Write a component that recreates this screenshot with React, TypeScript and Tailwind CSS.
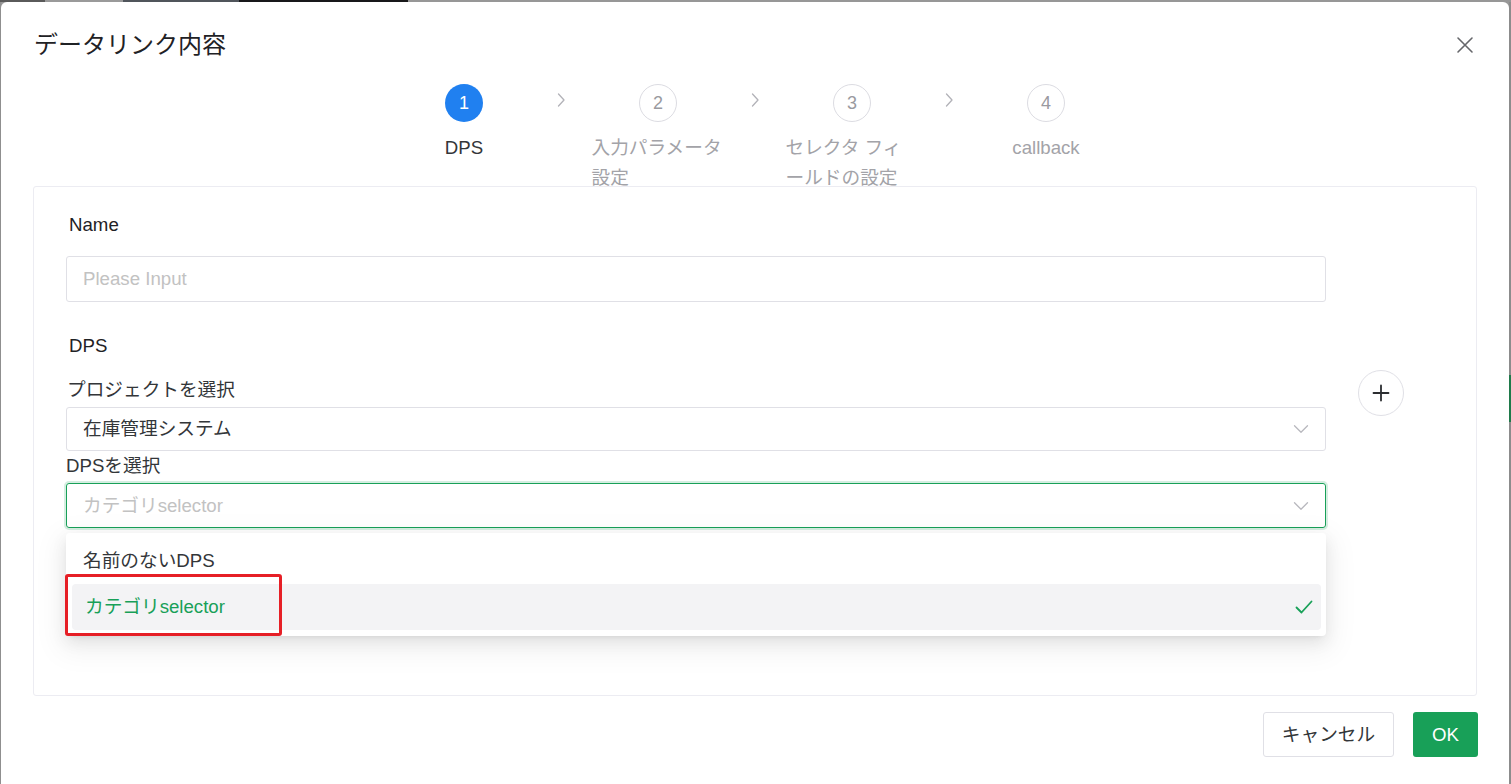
import React from "react";

const ChevronRight = () => (
  <svg width="10" height="16" viewBox="0 0 10 16" fill="none">
    <path d="M2.5 2l5.5 6-5.5 6" stroke="#b2b2b8" strokeWidth="1.3" strokeLinecap="round" strokeLinejoin="round" />
  </svg>
);

const SelectArrow = () => (
  <svg width="16" height="10" viewBox="0 0 16 10" fill="none">
    <path d="M1.5 1.8L8 8.2l6.5-6.4" stroke="#b8b8be" strokeWidth="1.3" strokeLinecap="round" strokeLinejoin="round" />
  </svg>
);

const CloseIcon = () => (
  <svg width="18" height="18" viewBox="0 0 18 18" fill="none">
    <path d="M2 2l14 14M16 2L2 16" stroke="#66676b" strokeWidth="1.6" strokeLinecap="round" />
  </svg>
);

const PlusIcon = () => (
  <svg width="18" height="18" viewBox="0 0 18 18" fill="none">
    <path d="M9 1.5v15M1.5 9h15" stroke="#2b2d30" strokeWidth="1.8" strokeLinecap="round" />
  </svg>
);

const CheckIcon = () => (
  <svg width="18" height="14" viewBox="0 0 18 14" fill="none">
    <path d="M1.5 7.5l5 5L16.5 1.5" stroke="#18a058" strokeWidth="1.8" strokeLinecap="round" strokeLinejoin="round" />
  </svg>
);

type Step = { n: number; label: string; active?: boolean };

const steps: Step[] = [
  { n: 1, label: "DPS", active: true },
  { n: 2, label: "入力パラメータ設定" },
  { n: 3, label: "セレクタ フィールドの設定" },
  { n: 4, label: "callback" },
];

function StepItem({ step }: { step: Step }) {
  return (
    <div className="w-[184px] flex flex-col items-center">
      {step.active ? (
        <div className="w-[38px] h-[38px] shrink-0 rounded-full bg-[#2080f0] flex items-center justify-center text-white text-[18px] leading-none">
          {step.n}
        </div>
      ) : (
        <div className="w-[38px] h-[38px] shrink-0 rounded-full border border-[#dcdce2] bg-white flex items-center justify-center text-[#9a9aa0] text-[18px] leading-none">
          {step.n}
        </div>
      )}
      <div className="mt-[11px] w-full flex justify-center shrink-0">
        <span
          className={
            "inline-block max-w-[133px] text-left text-[18.67px] leading-[30px] " +
            (step.active ? "text-[#333639]" : "text-[#a3a3a8]")
          }
        >
          {step.label}
        </span>
      </div>
    </div>
  );
}

export default function App() {
  return (
    <div className="w-[1511px] h-[784px] overflow-hidden bg-[#979797] flex flex-col font-['Liberation_Sans','Noto_Sans_CJK_JP',sans-serif]">
      {/* top strip of page behind overlay */}
      <div className="h-[2px] flex shrink-0">
        <div className="w-[45px] bg-[#5a5a5a]" />
        <div className="w-[78px] bg-[#9a9a9a]" />
        <div className="w-[116px] bg-[#50555b]" />
        <div className="w-[169px] bg-[#18181a]" />
        <div className="flex-1 bg-[#979797]" />
      </div>
      <div className="flex flex-1 min-h-0">
        <div className="w-[1px] bg-[#8f8f8f]" />
        {/* Modal */}
        <div className="w-[1508px] h-[782px] bg-white rounded-t-[6px] flex flex-col">
          {/* header */}
          <div className="pt-[27px] pl-[33px] pr-[35px] flex items-center justify-between h-[59px] shrink-0">
            <div className="h-[32px] leading-[32px] text-[24px] text-[#1f2225]">データリンク内容</div>
            <button className="w-[18px] h-[18px] flex items-center justify-center">
              <CloseIcon />
            </button>
          </div>

          {/* steps */}
          <div className="mt-[23px] h-[102px] flex justify-center shrink-0">
            {steps.map((s, i) => (
              <React.Fragment key={s.n}>
                <StepItem step={s} />
                {i < steps.length - 1 && (
                  <div className="w-[10px] pt-[8px]">
                    <ChevronRight />
                  </div>
                )}
              </React.Fragment>
            ))}
          </div>

          {/* content panel */}
          <div className="mx-[32px] h-[510px] border border-[#ececf2] rounded-[3px] pl-[32px] pt-[24px] shrink-0">
            <div className="pl-[3px] h-[28px] leading-[28px] text-[18.67px] text-[#1f2225]">Name</div>
            <div className="mt-[17px] w-[1260px] h-[46px] border border-[#e0e0e6] rounded-[3px] flex items-center px-[16px] text-[18.67px] text-[#c2c2c2]">
              Please Input
            </div>

            <div className="mt-[30px] flex">
              <div className="w-[1260px] flex flex-col">
                <div className="pl-[3px] h-[28px] leading-[28px] text-[18.67px] text-[#1f2225]">DPS</div>
                <div className="mt-[16px] pl-[1px] h-[28px] leading-[28px] text-[18.67px] text-[#333639]">プロジェクトを選択</div>
                <div className="mt-[3px] h-[44px] border border-[#e0e0e6] rounded-[3px] flex items-center justify-between pl-[16px] pr-[16px] text-[18.67px] text-[#333639]">
                  <span>在庫管理システム</span>
                  <SelectArrow />
                </div>
                <div className="mt-[1px] h-[28px] leading-[28px] text-[18.67px] text-[#333639]">DPSを選択</div>
                <div className="mt-[3px] relative">
                  <div className="h-[45px] border border-[#18a058] rounded-[3px] shadow-[0_0_0_2px_rgba(24,160,88,0.18)] flex items-center justify-between pl-[16px] pr-[16px] text-[18.67px] text-[#c2c2c2]">
                    <span>カテゴリselector</span>
                    <SelectArrow />
                  </div>
                  {/* dropdown menu */}
                  <div className="absolute left-0 right-0 top-[50px] z-10 bg-white rounded-[4px] pt-[5px] pb-[6px] pl-[6px] pr-[5px] shadow-[0_3px_6px_-4px_rgba(0,0,0,0.12),0_6px_16px_0_rgba(0,0,0,0.08),0_9px_28px_8px_rgba(0,0,0,0.05)]">
                    <div className="h-[46px] flex items-center pl-[11px] text-[18.67px] text-[#333639]">名前のないDPS</div>
                    <div className="h-[46px] flex items-center justify-between pl-[13px] pr-[8px] bg-[#f3f3f5] rounded-[4px] text-[18.67px] text-[#18a058]">
                      <span>カテゴリselector</span>
                      <CheckIcon />
                    </div>
                    {/* red annotation box */}
                    <div className="absolute left-[-1px] top-[41px] w-[217px] h-[62px] border-[3px] border-[#e61f26] rounded-[3px]" />
                  </div>
                </div>
              </div>
              <div className="ml-[32px] mt-[38px] w-[46px] h-[46px] rounded-full border border-[#e0e0e6] flex items-center justify-center shrink-0">
                <PlusIcon />
              </div>
            </div>
          </div>

          {/* footer */}
          <div className="mt-[16px] pr-[31px] flex justify-end gap-[19px]">
            <button className="w-[131px] h-[45px] border border-[#e0e0e6] rounded-[3px] bg-white text-[18.67px] text-[#333639]">
              キャンセル
            </button>
            <button className="w-[65px] h-[45px] rounded-[3px] bg-[#18a058] text-[18.67px] text-white">
              OK
            </button>
          </div>
        </div>
        <div className="w-[2px] flex flex-col">
          <div className="h-[373px] bg-[#8c8c8c]" />
          <div className="h-[47px] bg-[#1f7a4a]" />
          <div className="flex-1 bg-[#8c8c8c]" />
        </div>
      </div>
    </div>
  );
}
